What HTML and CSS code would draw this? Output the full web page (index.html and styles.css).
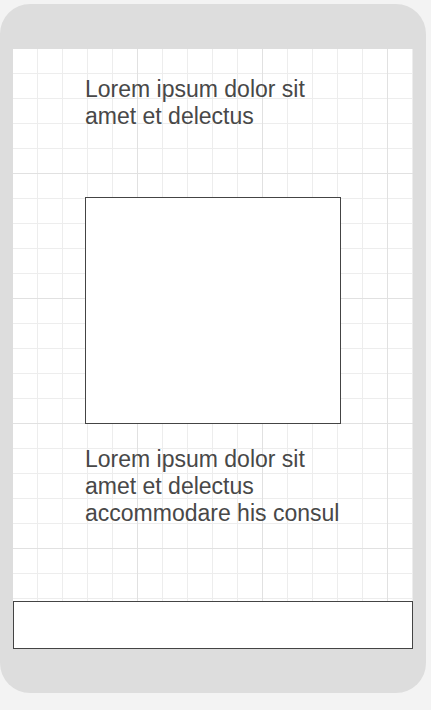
FILE: index.html
```html
<!DOCTYPE html>
<html lang="en">
<head>
    <meta charset="UTF-8">
    <meta name="viewport" content="width=device-width, initial-scale=1.0">
    <title>Mobile Wireframe</title>
    <link rel="stylesheet" href="styles.css">
</head>
<body>
    <div class="phone">
        <div class="screen">
            <div class="content">
                <p class="caption">Lorem ipsum dolor sit amet et delectus</p>
                <div class="picture"></div>
                <p class="caption caption-long">Lorem ipsum dolor sit amet et delectus accommodare his consul</p>
            </div>
            <div class="tab-bar"></div>
        </div>
    </div>
</body>
</html>
```

FILE: styles.css
```css
body {
    margin: 0;
    padding-top: 4px;
    background-color: #f3f3f3;
    font-family: "Liberation Sans", Arial, sans-serif;
}

.phone {
    width: 400px;
    padding: 45px 13px 44px;
    background-color: #dddddd;
    border-radius: 30px;
}

.screen {
    display: flex;
    flex-direction: column;
    height: 600px;
    background-color: #fff;
    /* major lines every 125px, minor every 25px */
    background-image:
        linear-gradient(90deg, transparent 124px, #e1e1e1 124px),
        linear-gradient(transparent 124px, #e1e1e1 124px),
        linear-gradient(90deg, transparent 24px, #ededed 24px),
        linear-gradient(transparent 24px, #ededed 24px);
    background-size: 125px 125px, 125px 125px, 25px 25px, 25px 25px;
}

.content {
    width: 256px;
    padding: 27px 0 0 72px;
}

.caption {
    margin: 0;
    font-size: 23px;
    line-height: 26.67px;
    color: #484848;
}

.picture {
    height: 225px;
    margin: 68px 0 22px;
    border: 1px solid #444;
    background-color: #fff;
}

.tab-bar {
    height: 46px;
    margin-top: auto;
    border: 1px solid #444;
    background-color: #fff;
}
```
